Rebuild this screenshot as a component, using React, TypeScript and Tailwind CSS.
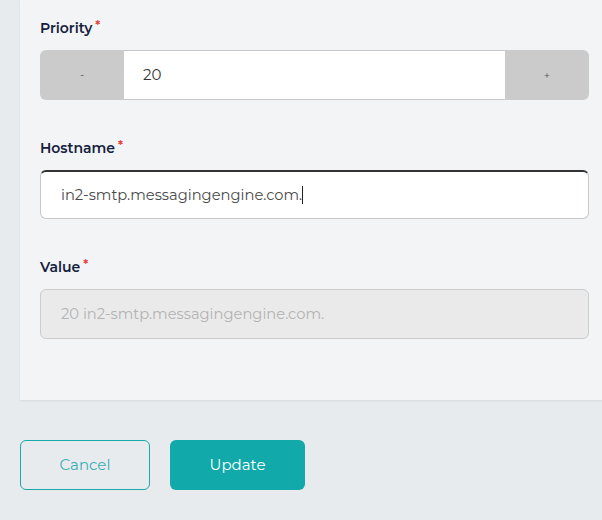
import React from "react";

export default function App() {
  const font = { fontFamily: "Montserrat, 'Noto Sans', Lato, sans-serif" };
  return (
    <div className="w-[602px] h-[520px] bg-[#e8ebee] overflow-hidden" style={font}>
      <div className="ml-[20px] w-[600px] h-[400px] bg-[#f3f4f6] shadow-[0_1px_2px_rgba(0,0,0,0.08)] pl-[20px] pr-[11px] pt-[18px]">
        <div className="flex items-center h-[20px] text-[14px] font-semibold text-[#14213d]">
          Priority<span className="text-[#e53935] ml-[3px] text-[12px] -mt-[4px]">*</span>
        </div>
        <div className="mt-[12px] flex h-[50px] w-[549px]">
          <div className="w-[84px] bg-[#cbcbcb] rounded-l-[6px] flex items-center justify-center text-[11px] text-[#555]">-</div>
          <div className="flex-1 bg-white border-y border-[#c8c8c8] flex items-center pl-[19px] text-[15px] text-[#333]">20</div>
          <div className="w-[84px] bg-[#cbcbcb] rounded-r-[6px] flex items-center justify-center text-[11px] text-[#555]">+</div>
        </div>

        <div className="mt-[38px] flex items-center h-[20px] text-[14px] font-semibold text-[#14213d]">
          Hostname<span className="text-[#e53935] ml-[3px] text-[12px] -mt-[4px]">*</span>
        </div>
        <div className="mt-[12px] h-[49px] w-[549px] bg-white border border-[#c8c8c8] border-t-[2px] border-t-[#333] rounded-[6px] flex items-center pl-[20px] text-[14.7px] text-[#4a4a4a]">
          in2-smtp.messagingengine.com.<span className="inline-block w-px h-[18px] bg-[#222]"></span>
        </div>

        <div className="mt-[38px] flex items-center h-[20px] text-[14px] font-semibold text-[#14213d]">
          Value<span className="text-[#e53935] ml-[3px] text-[12px] -mt-[4px]">*</span>
        </div>
        <div className="mt-[12px] h-[50px] w-[549px] bg-[#eaeaea] border border-[#cccccc] rounded-[6px] flex items-center pl-[20px] text-[14.7px] text-[#b3b3b3]">
          20 in2-smtp.messagingengine.com.
        </div>
      </div>
      <div className="ml-[20px] mt-[40px] flex gap-[20px]">
        <button className="w-[130px] h-[50px] border border-[#18aaaa] rounded-[6px] text-[15px] text-[#3aadb5]">Cancel</button>
        <button className="w-[135px] h-[50px] bg-[#11a9a9] rounded-[6px] text-[15px] text-white">Update</button>
      </div>
    </div>
  );
}
